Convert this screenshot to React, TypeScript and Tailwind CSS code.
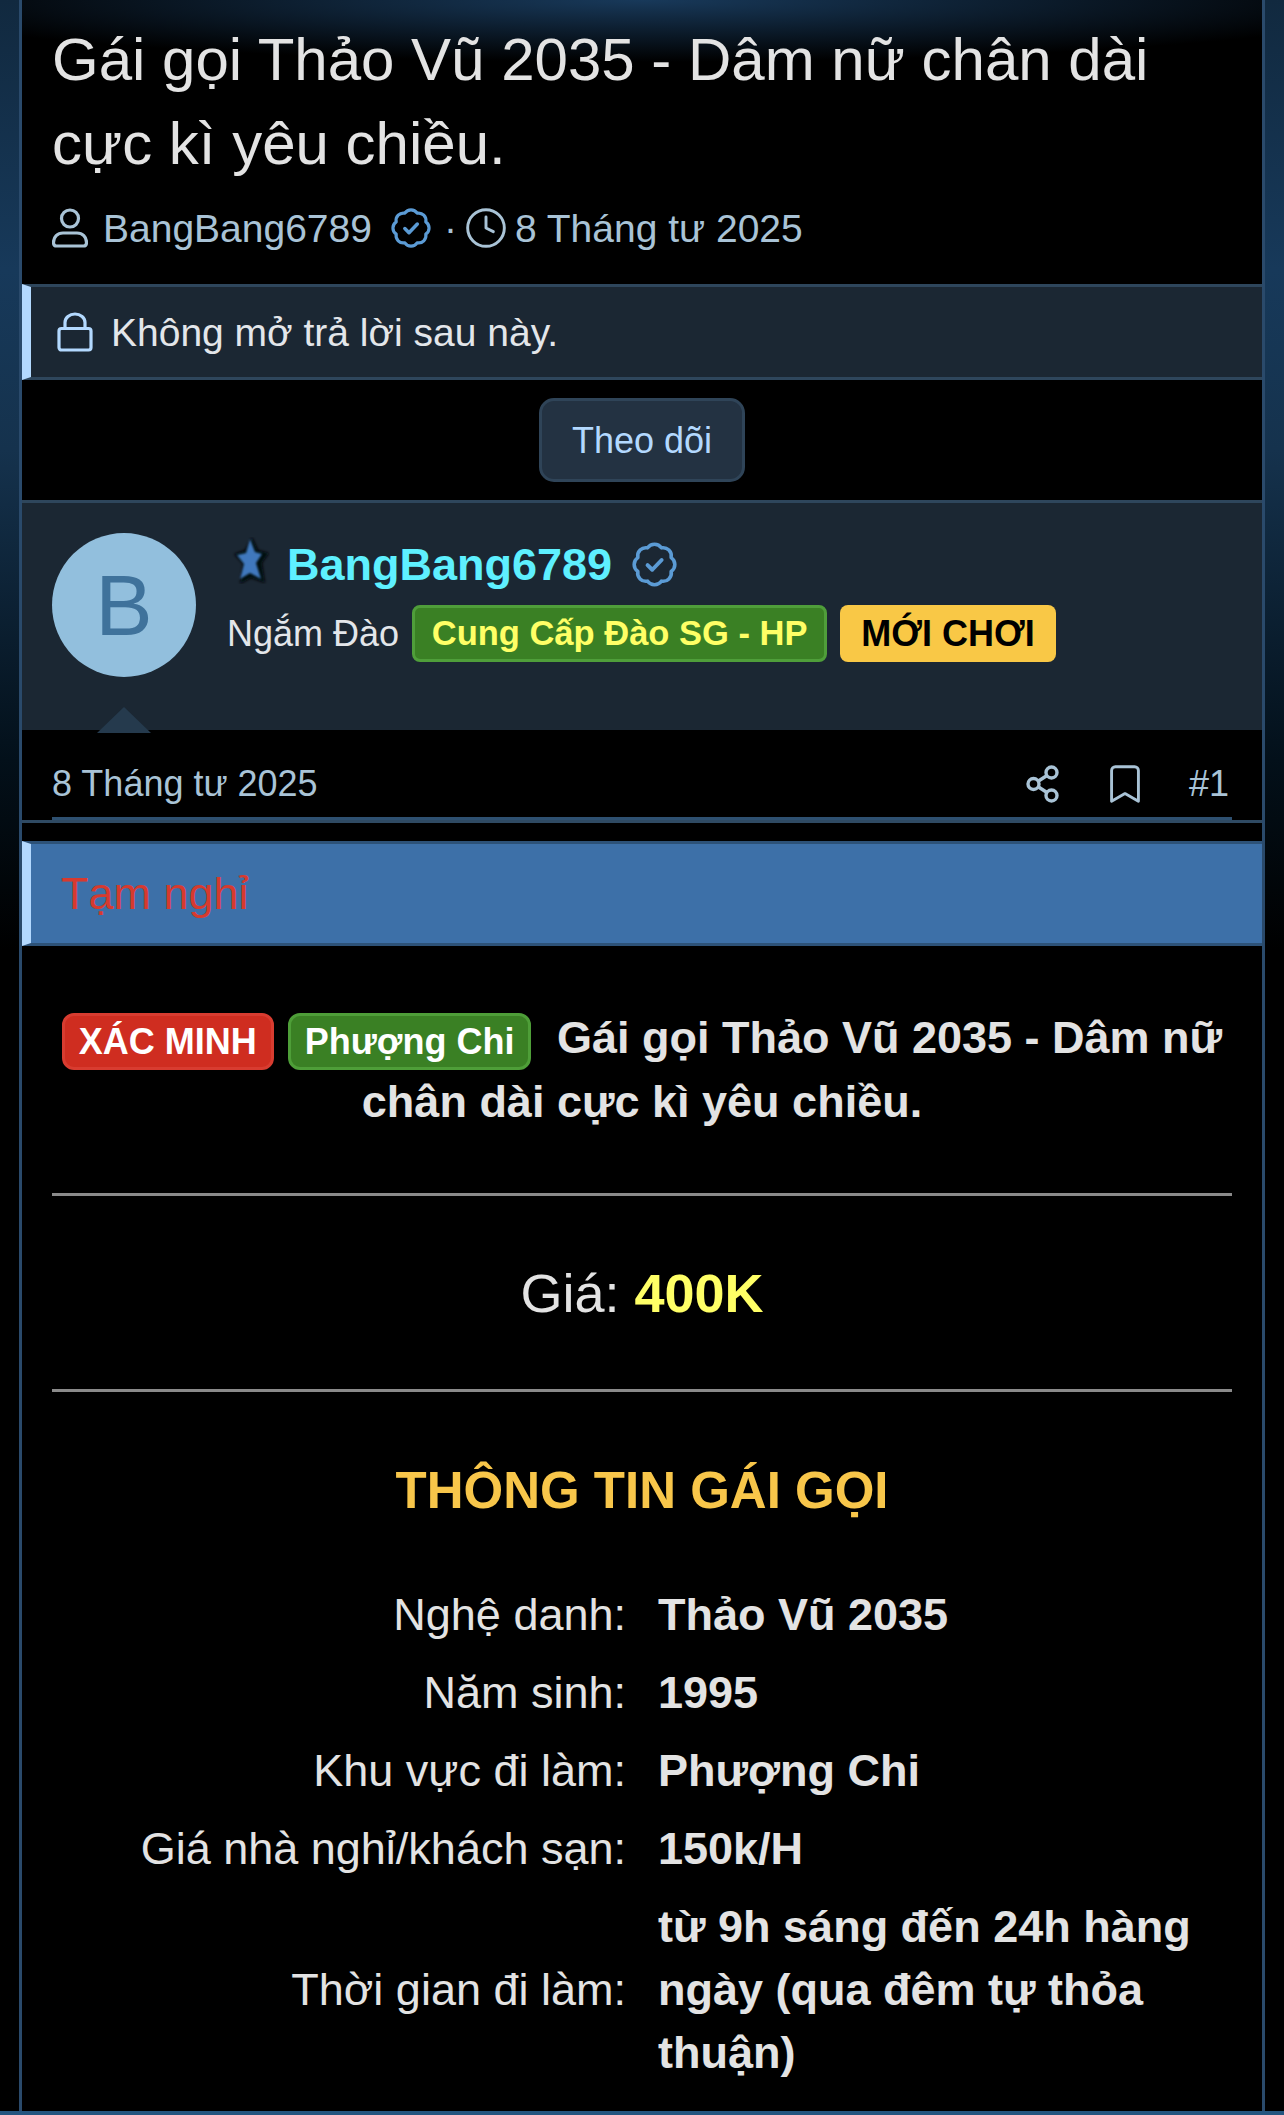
import { Bookmark, Clock } from "lucide-react";

function VerifiedIcon({ size }: { size: number }) {
  return (
    <svg width={size} height={size} viewBox="0 0 24 24" fill="none" stroke="#5b9bd5" strokeWidth="1.900" strokeLinejoin="round" strokeLinecap="round" className="shrink-0">
      <path d="M8.330 3.130A4.400 4.400 0 0 1 15.670 3.130A4.400 4.400 0 0 1 20.870 8.330A4.400 4.400 0 0 1 20.870 15.670A4.400 4.400 0 0 1 15.670 20.870A4.400 4.400 0 0 1 8.330 20.870A4.400 4.400 0 0 1 3.130 15.670A4.400 4.400 0 0 1 3.130 8.330A4.400 4.400 0 0 1 8.330 3.130Z" />
      <path d="M8.300 12.300l2.500 2.500 5-5.200" strokeWidth="2.100" />
    </svg>
  );
}

function UserIcon() {
  return (
    <svg width="36" height="40" viewBox="0 0 36 40" fill="none" stroke="#a9c3d6" strokeWidth="3.200" className="shrink-0">
      <circle cx="18" cy="10.500" r="8.500" />
      <path d="M11 25h14c5.500 0 9.500 4 9.500 9.500 0 2.500-1.500 3.500-3 3.500H4.500c-1.500 0-3-1-3-3.500C1.500 29 5.500 25 11 25z" />
    </svg>
  );
}

function LockIcon() {
  return (
    <svg width="36" height="40" viewBox="0 0 36 40" fill="none" stroke="#b3d9ff" strokeWidth="3.200" className="shrink-0">
      <path d="M8 17v-6.500a10 8.500 0 0 1 20 0V17" />
      <rect x="2" y="16.500" width="32" height="21.500" rx="2.500" />
    </svg>
  );
}

function ShareIcon() {
  return (
    <svg width="34" height="38" viewBox="0 0 34 38" fill="none" stroke="#a9c3d6" strokeWidth="3.400">
      <circle cx="25.500" cy="7.500" r="5.500" />
      <circle cx="7.500" cy="19" r="5.500" />
      <circle cx="25.500" cy="30.500" r="5.500" />
      <path d="M12.500 16l8.500-5.500M12.500 22l8.500 5.500" />
    </svg>
  );
}

function StarImage() {
  return (
    <svg width="38" height="47" viewBox="0 0 38 47" className="mt-[4px] shrink-0 self-start">
      <defs>
        <filter id="soft" x="-20%" y="-20%" width="140%" height="140%">
          <feGaussianBlur stdDeviation="1.200" />
        </filter>
        <filter id="softer" x="-20%" y="-20%" width="140%" height="140%">
          <feGaussianBlur stdDeviation="1.500" />
        </filter>
      </defs>
      <path d="M20 0l6 13 11 3-7 10 3 20-14-5-11 6 3-20L2 17l11-4z" fill="#05080d" filter="url(#softer)" />
      <path d="M18 2l5 13 7 2-6 9 5 16-11-6-10 6 4-15-7-9 9-2z" fill="#3f78bd" filter="url(#soft)" />
    </svg>
  );
}

function Row({ label, value }: { label: string; value: string }) {
  return (
    <div className="flex items-center gap-[32px] py-[7.500px]">
      <div className="w-[604px] shrink-0 text-right">{label}</div>
      <div className="w-[574px] shrink-0 font-bold">{value}</div>
    </div>
  );
}

export default function App() {
  return (
    <div
      className="h-[2115px] overflow-hidden border-b-[4px] border-[#24557f] bg-[linear-gradient(180deg,#11293f_0px,#17395a_270px,#15324d_450px,#03101a_760px,#000_950px)] px-[19px] text-[45px] leading-[63px] text-[#e3e3e3]"
      style={{ fontFamily: '"Liberation Sans", Arial, sans-serif' }}
    >
      <div className="h-[2111px] overflow-hidden border-x-[3px] border-[#2a4a6b] bg-black">
        <header className="h-[284px] bg-[radial-gradient(ellipse_62%_62px_at_50%_0,#18395a,#000)] px-[30px] pt-[18px]">
          <h1 className="text-[60px] font-normal leading-[84px]">
            Gái gọi Thảo Vũ 2035 - Dâm nữ chân dài cực kì yêu chiều.
          </h1>
          <div className="mt-[15px] flex h-[54px] items-center text-[39px] text-[#a9c3d6]">
            <span className="mr-[15px] flex"><UserIcon /></span>
            <span>BangBang6789</span>
            <span className="ml-[19px] flex"><VerifiedIcon size={40} /></span>
            <span className="ml-[13px]">·</span>
            <Clock size={44} strokeWidth={1.600} color="#a9c3d6" className="ml-[7px]" />
            <span className="ml-[7px]">8 Tháng tư 2025</span>
          </div>
        </header>

        <div className="flex h-[96px] items-center gap-[18px] border-y-[3px] border-l-[9px] border-y-[#2e465c] border-l-[#b3d9ff] bg-[#1b2733] pl-[26px] text-[39px] text-[#e3e6ea]">
          <LockIcon />
          <span>Không mở trả lời sau này.</span>
        </div>

        <div className="flex h-[120px] items-center justify-center">
          <button className="flex h-[84px] w-[206px] items-center justify-center rounded-[15px] border-[3px] border-[#2f4458] bg-[#233242] text-[36px] text-[#b3d9ff]">
            Theo dõi
          </button>
        </div>

        <section className="relative flex h-[230px] border-t-[3px] border-[#2e465c] bg-[#1b2733] pl-[30px] pt-[30px]">
          <div className="flex h-[144px] w-[144px] shrink-0 items-center justify-center rounded-full bg-[#92bfdd] text-[86px] leading-none text-[#3f729b]">
            B
          </div>
          <div className="ml-[31px] flex flex-col">
            <div className="flex h-[63px] items-center pl-[5px]">
              <StarImage />
              <span className="ml-[17px] text-[45px] font-bold text-[#5ef0ff]">BangBang6789</span>
              <span className="ml-[20px] flex"><VerifiedIcon size={45} /></span>
            </div>
            <div className="mt-[6px] flex items-center text-[36px] text-[#e3e6ea]">
              <span>Ngắm Đào</span>
              <span className="ml-[13px] flex h-[57px] w-[415px] items-center justify-center rounded-[8px] border-[3px] border-[#4f9e3a] bg-[#3a8024] text-[34.500px] font-bold text-[#ffff66]">
                Cung Cấp Đào SG - HP
              </span>
              <span className="ml-[13px] flex h-[57px] w-[216px] items-center justify-center rounded-[8px] bg-[#f9c846] text-[36px] font-bold text-black">
                MỚI CHƠI
              </span>
            </div>
          </div>
          <div className="absolute bottom-[-3px] left-[75px] h-[26px] w-[54px] bg-[#253a4d] [clip-path:polygon(50%_0,100%_100%,0_100%)]" />
        </section>

        <div className="border-b-[3px] border-[#2f4a63]">
          <div className="mx-[30px] flex h-[90px] items-center justify-between border-b-[3px] border-[#2e5070] pt-[20px] text-[36px] text-[#a9c3d6]">
            <span>8 Tháng tư 2025</span>
            <div className="flex items-center">
              <ShareIcon />
              <Bookmark size={46} strokeWidth={1.500} color="#a9c3d6" className="ml-[42px]" />
              <span className="ml-[41px] pr-[3px]">#1</span>
            </div>
          </div>
        </div>

        <div className="mt-[18px] flex h-[105px] items-center border-y-[3px] border-l-[9px] border-y-[#2d5278] border-l-[#b3d9ff] bg-[#3d70a8] pl-[30px] text-[45px] text-[#d63a2f]">
          Tạm nghỉ
        </div>

        <div className="px-[30px] pt-[60px]">
          <p className="text-center font-bold">
            <span className="inline-block h-[57px] rounded-[12px] border-[3px] border-[#d83c30] bg-[#cf2d20] px-[14px] align-middle text-[36px] leading-[51px] text-white">
              XÁC MINH
            </span>
            <span className="ml-[14px] mr-[13px] inline-block h-[57px] rounded-[12px] border-[3px] border-[#4e9e38] bg-[#3a8024] px-[14px] align-middle text-[36px] leading-[51px] text-white">
              Phượng Chi
            </span>{" "}
            Gái gọi Thảo Vũ 2035 - Dâm nữ chân dài cực kì yêu chiều.
          </p>
          <hr className="mt-[60px] border-t-[3px] border-[#8a8a8a]" />
          <p className="mt-[62px] text-center text-[54px] leading-[71px]">
            Giá: <b className="text-[#ffff66]">400K</b>
          </p>
          <hr className="mt-[60px] border-t-[3px] border-[#8a8a8a]" />
          <h2 className="mt-[63px] text-center text-[51px] font-bold leading-[71px] text-[#f8c64a]">THÔNG TIN GÁI GỌI</h2>
        </div>

        <div className="mt-[50px]">
          <Row label="Nghệ danh:" value="Thảo Vũ 2035" />
          <Row label="Năm sinh:" value="1995" />
          <Row label="Khu vực đi làm:" value="Phượng Chi" />
          <Row label="Giá nhà nghỉ/khách sạn:" value="150k/H" />
          <Row label="Thời gian đi làm:" value="từ 9h sáng đến 24h hàng ngày (qua đêm tự thỏa thuận)" />
        </div>
      </div>
    </div>
  );
}
